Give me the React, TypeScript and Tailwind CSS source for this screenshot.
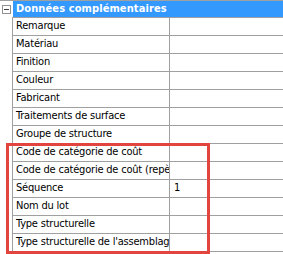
import React from "react";

const rows: [string, string][] = [
  ["Remarque", ""],
  ["Matériau", ""],
  ["Finition", ""],
  ["Couleur", ""],
  ["Fabricant", ""],
  ["Traitements de surface", ""],
  ["Groupe de structure", ""],
  ["Code de catégorie de coût", ""],
  ["Code de catégorie de coût (repère)", ""],
  ["Séquence", "1"],
  ["Nom du lot", ""],
  ["Type structurelle", ""],
  ["Type structurelle de l'assemblage", ""],
];

export default function App() {
  return (
    <div
      className="relative w-[283px] h-[254px] bg-white overflow-hidden text-[11px] text-black"
      style={{ fontFamily: "'DejaVu Sans Condensed', 'DejaVu Sans', sans-serif", fontStretch: "condensed" }}
    >
      <div className="flex h-[17px] border-t border-[#a0a0a0]">
        <div className="w-[13px] shrink-0 flex items-center justify-center">
          <div className="w-[9px] h-[9px] border border-[#919191] bg-white flex items-center justify-center">
            <div className="w-[5px] h-px bg-[#404040]" />
          </div>
        </div>
        <div className="flex-1 bg-[#3399ff] flex items-center pl-[3px] font-bold text-white tracking-[0.1px]">
          Données complémentaires
        </div>
      </div>
      <div className="flex">
        <div className="w-[13px] shrink-0 border-r border-[#a0a0a0] h-[237px]" />
        <div className="flex-1 flex flex-col border-t border-[#a0a0a0]">
          {rows.map(([k, v]) => (
            <div key={k} className="flex h-[18px] border-b border-[#a0a0a0]">
              <div className="w-[157px] shrink-0 border-r border-[#a0a0a0] pl-[3px] flex items-center overflow-hidden whitespace-nowrap tracking-[-0.2px]">
                {k}
              </div>
              <div className="flex-1 pl-[4px] flex items-center">{v}</div>
            </div>
          ))}
        </div>
      </div>
      <div className="absolute left-[6px] top-[143px] w-[204px] h-[111px] border-[3px] border-[#e2453f]" />
    </div>
  );
}
